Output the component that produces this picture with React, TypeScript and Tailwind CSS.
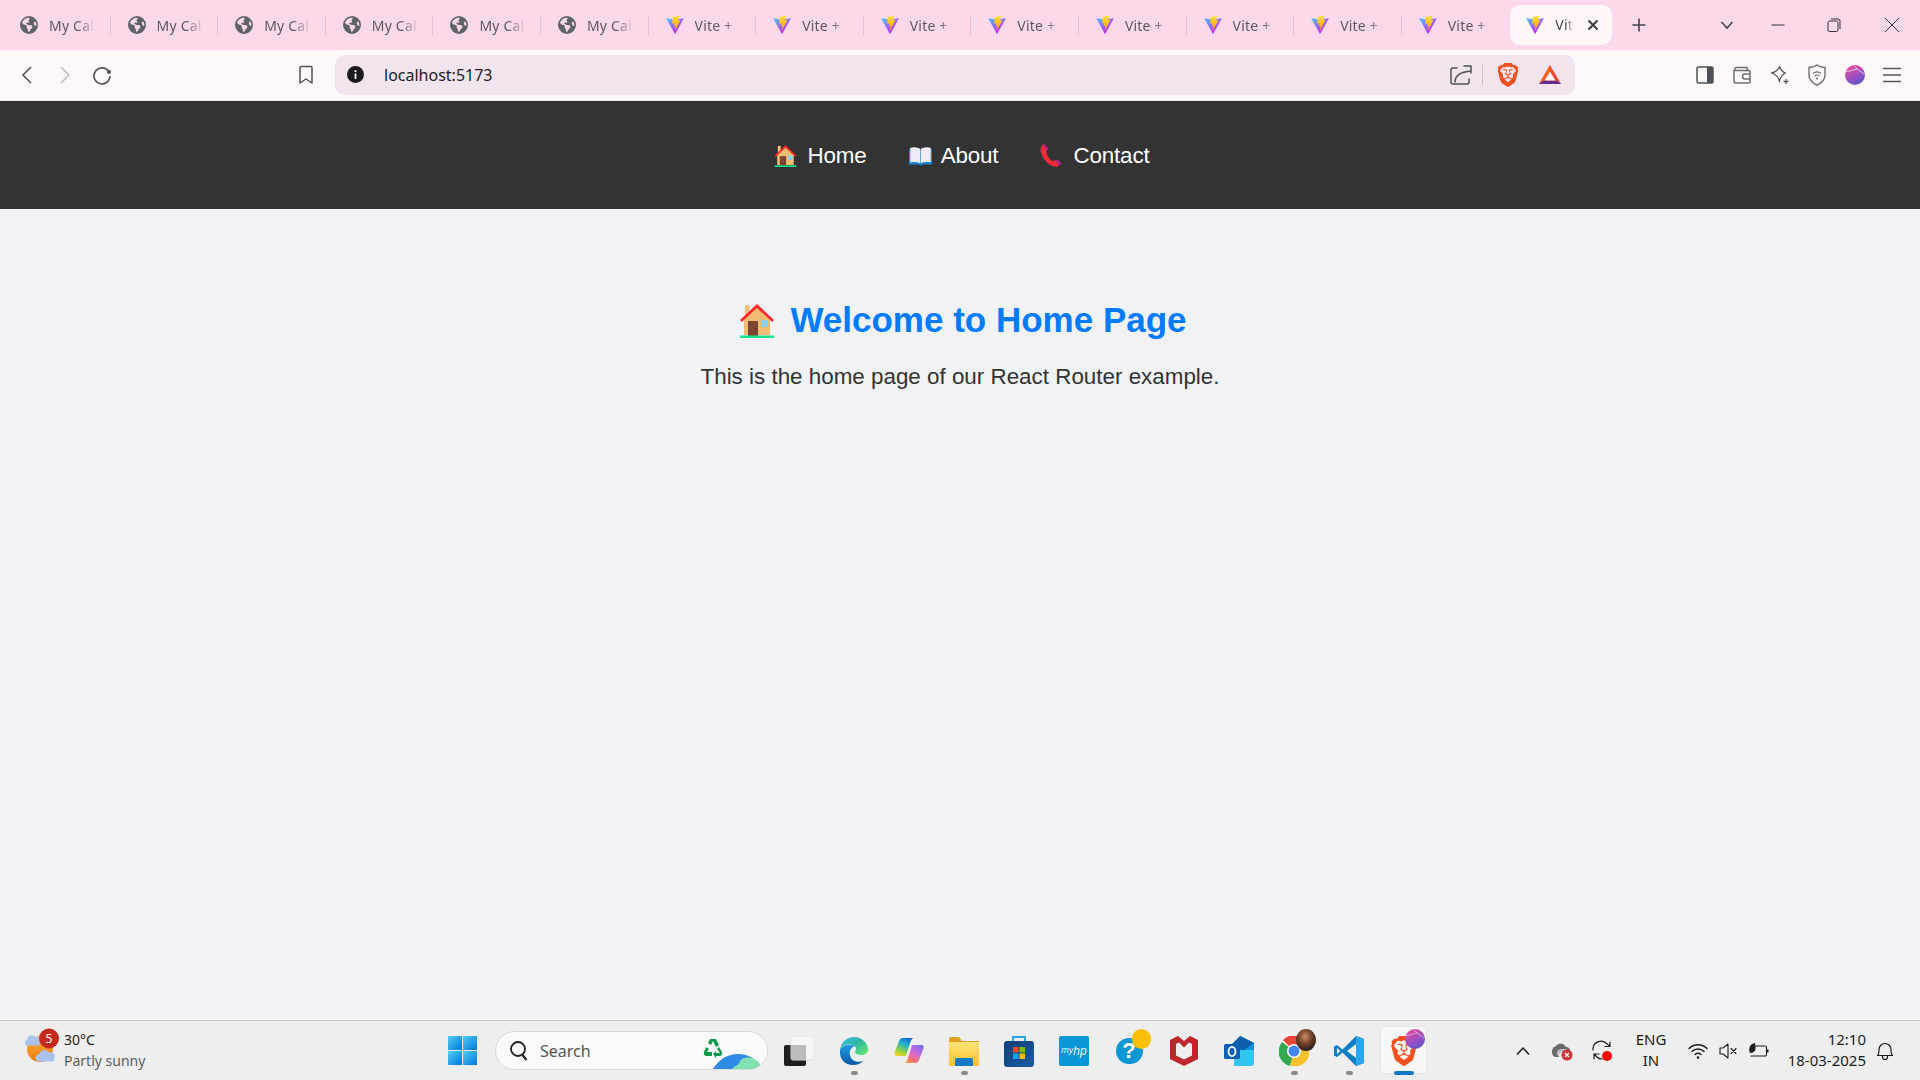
import React from "react";
import { FaEarthAmericas } from "react-icons/fa6";
import { SiBrave } from "react-icons/si";

const Vite = ({ s = 20 }: { s?: number }) => (
  <svg width={s} height={s} viewBox="0 0 32 32" className="shrink-0">
    <path d="M29.8836 6.146L16.7418 29.6457c-.2714.4851-.9684.488-1.2439.0052L2.0956 6.1482c-.3-.5262.15-1.1634.7463-1.057l13.1561 2.3516a.7.7 0 0 0 .2537-.0004l12.8808-2.3478c.5945-.1083 1.0463.5241.7511 1.0513Z" fill="url(#viteA)" />
    <path d="M22.2644 1.1192l-9.7253 1.9056a.357.357 0 0 0-.2879.3295l-.5982 10.1042c-.0141.238.2045.4227.4367.3691l2.7077-.6248c.2534-.0585.4823.1647.4302.4194l-.8044 3.9393c-.0542.265.1947.4916.4536.413l1.6723-.5081c.2592-.0787.5082.1486.4536.4137l-1.2783 6.1876c-.08.3871.4348.5981.6495.2662l.1434-.2216 7.9243-15.8133c.1326-.2647-.096-.5667-.3867-.5106l-2.787.5379c-.2618.0505-.4846-.1933-.4108-.4492l1.819-6.3053c.0739-.2565-.1495-.5-.4113-.4486Z" fill="url(#viteB)" />
  </svg>
);

const Defs = () => (
  <svg width="0" height="0" className="absolute">
    <defs>
      <linearGradient id="viteA" x1="1.6" y1="4" x2="18" y2="26" gradientUnits="userSpaceOnUse">
        <stop stopColor="#41D1FF" /><stop offset="1" stopColor="#BD34FE" />
      </linearGradient>
      <linearGradient id="viteB" x1="15" y1="1.5" x2="18" y2="22" gradientUnits="userSpaceOnUse">
        <stop stopColor="#FFEA83" /><stop offset=".08" stopColor="#FFDD35" /><stop offset="1" stopColor="#FFA800" />
      </linearGradient>
      <linearGradient id="edgeG" x1="0" y1="0" x2="1" y2="1">
        <stop stopColor="#35c1f1" /><stop offset=".45" stopColor="#2fb7a0" /><stop offset="1" stopColor="#66eb6e" />
      </linearGradient>
      <linearGradient id="edgeB" x1="0" y1="0" x2="0" y2="1">
        <stop stopColor="#1b9de2" /><stop offset="1" stopColor="#0c59a4" />
      </linearGradient>
      <linearGradient id="winG" x1="0" y1="0" x2="1" y2="1">
        <stop stopColor="#52d0fb" /><stop offset="1" stopColor="#0473d4" />
      </linearGradient>
      <linearGradient id="copA" x1="0.7" y1="0" x2="0.2" y2="1">
        <stop stopColor="#1266d8" /><stop offset=".35" stopColor="#22b4c8" /><stop offset=".7" stopColor="#8fd04a" /><stop offset="1" stopColor="#f7d62e" />
      </linearGradient>
      <linearGradient id="copB" x1="0.8" y1="0" x2="0.2" y2="1">
        <stop stopColor="#7a6cf0" /><stop offset=".45" stopColor="#d86ad8" /><stop offset=".8" stopColor="#f8706a" /><stop offset="1" stopColor="#f8a040" />
      </linearGradient>
      <linearGradient id="foldG" x1="0" y1="0" x2="0" y2="1">
        <stop stopColor="#ffe27a" /><stop offset="1" stopColor="#fbc02d" />
      </linearGradient>
      <linearGradient id="storeG" x1="0" y1="0" x2="1" y2="1">
        <stop stopColor="#0c3f78" /><stop offset="1" stopColor="#1d5c9f" />
      </linearGradient>
      <radialGradient id="brownG" cx=".45" cy=".35" r=".7">
        <stop stopColor="#c98d62" /><stop offset=".5" stopColor="#6f3f28" /><stop offset="1" stopColor="#1d1512" />
      </radialGradient>
      <linearGradient id="purpleG" x1="0.2" y1="0" x2="0.7" y2="1">
        <stop stopColor="#e8489a" /><stop offset=".55" stopColor="#a04fc0" /><stop offset="1" stopColor="#5c55c8" />
      </linearGradient>
      <linearGradient id="orangeG" x1="0" y1="0" x2="0" y2="1">
        <stop stopColor="#fbb03b" /><stop offset="1" stopColor="#ee7a10" />
      </linearGradient>
      <linearGradient id="batL" x1="0" y1="0" x2="1" y2="1">
        <stop stopColor="#f15a24" /><stop offset="1" stopColor="#ee3b36" />
      </linearGradient>
    </defs>
  </svg>
);

const House = ({ s }: { s: number }) => (
  <svg width={s} height={s} viewBox="0 0 36 36" className="shrink-0">
    <rect x="6" y="3" width="4.5" height="12" fill="#f4c27d" />
    <path d="M5 17 18 5l13 12v16H5Z" fill="#f3bc73" />
    <path d="M1 18 18 2l17 16-1.8 2L18 6 2.800 20Z" fill="#f62b2b" />
    <rect x="9" y="19" width="10" height="15" fill="#7d4533" />
    <circle cx="16.700" cy="27" r=".7" fill="#3b1c12" />
    <rect x="22" y="18" width="7" height="7" fill="#8fd0f8" />
    <rect x="1" y="33.500" width="34" height="2.500" fill="#16e58d" />
  </svg>
);

const Book = ({ s }: { s: number }) => (
  <svg width={s} height={s} viewBox="0 0 36 36" className="shrink-0">
    <path d="M0 9c5-3 13-3 18 0 5-3 13-3 18 0v23H20l-2 2-2-2H0Z" fill="#1c86d6" />
    <path d="M2 6c6-2 12-1 15.500 2v22C14 28 8 27.500 2 28.500Z" fill="#f1ecf8" />
    <path d="M34 6c-6-2-12-1-15.500 2v22c3.500-2 9.500-2.500 15.500-1.500Z" fill="#f1ecf8" />
  </svg>
);

const Phone = ({ s }: { s: number }) => (
  <svg width={s} height={s} viewBox="0 0 36 36" className="shrink-0">
    <path d="M4 1c-3 3-4 8-2 14 3 9 10 17 19 20 4 1.200 7 .5 9-1.500l-5-8-6 1.500C14 23 10 17 9.500 11L13 7.500 7 .5Z" fill="#f52a3a" />
    <path d="M4 1 7 .5l6 7-2 2Z" fill="#a81f8c" />
    <path d="m25 25.500 3-1 6 6-4 3Z" fill="#b02390" />
  </svg>
);

const Tab = ({ vite, last }: { vite?: boolean; last?: boolean }) => (
  <div className={`w-[107.6px] h-5 flex items-center gap-[10px] pl-4 shrink-0 ${last ? "" : "border-r border-[#e0c4d6]"}`}>
    <span className="w-5 h-5 flex items-center justify-center shrink-0">
      {vite ? <Vite /> : <FaEarthAmericas size={18} className="text-[#5f6368]" />}
    </span>
    <span className="w-[48px] whitespace-nowrap text-[14px] tracking-[0.2px] text-[#5c5960] [mask-image:linear-gradient(90deg,#000_60%,transparent_98%)]">
      {vite ? "Vite +" : "My Cal"}
    </span>
  </div>
);

const Cell = ({ children, dot, className = "" }: { children: React.ReactNode; dot?: boolean; className?: string }) => (
  <div className={`w-[55px] h-[59px] relative flex items-center justify-center shrink-0 ${className}`}>
    {children}
    {dot && <span className="absolute left-[24px] bottom-[5px] w-[7px] h-[4px] rounded-full bg-[#8a8a8a]" />}
  </div>
);

const stroke = { fill: "none", stroke: "currentColor", strokeWidth: 1.4, strokeLinecap: "round", strokeLinejoin: "round" } as const;

export default function App() {
  return (
    <div className="w-[1920px] h-[1080px] overflow-hidden flex flex-col bg-[#f0f2f5] font-['Liberation_Sans',Arial,sans-serif]">
      <Defs />
      {/* tab strip */}
      <div className="h-[50px] shrink-0 bg-[#fbd9eb] flex items-center pl-[3px] font-['Noto_Sans',sans-serif]">
        {Array.from({ length: 6 }).map((_, i) => <Tab key={i} />)}
        {Array.from({ length: 8 }).map((_, i) => <Tab key={i} vite last={i === 7} />)}
        <div className="ml-[1px] w-[102px] h-[40px] -mt-[1px] rounded-[10px] bg-[#fff7f8] flex items-center pl-[15px] shrink-0">
          <Vite />
          <span className="ml-[10px] w-[20px] whitespace-nowrap text-[14px] tracking-[0.2px] text-[#444] [mask-image:linear-gradient(90deg,#000_50%,transparent)]">Vit</span>
          <svg width="12" height="12" viewBox="0 0 12 12" className="ml-[12px] text-[#3c3c3c]"><path d="M1.500 1.500l9 9M10.500 1.500l-9 9" fill="none" stroke="currentColor" strokeWidth="2" /></svg>
        </div>
        <svg width="16" height="16" viewBox="0 0 16 16" className="ml-[19px] text-[#444]"><path d="M8 1.500v13M1.500 8h13" fill="none" stroke="currentColor" strokeWidth="1.600" /></svg>
        <svg width="14" height="10" viewBox="0 0 14 10" className="ml-[73px] text-[#444]"><path d="M1.500 2 7 8l5.500-6" fill="none" stroke="currentColor" strokeWidth="1.600" /></svg>
        <svg width="14" height="14" viewBox="0 0 14 14" className="ml-[37px] text-[#333]"><path d="M0.500 7h13" stroke="currentColor" strokeWidth="1" /></svg>
        <svg width="14" height="14" viewBox="0 0 14 14" className="ml-[42px] text-[#333]"><rect x="1" y="3" width="10" height="10.500" rx="1.500" fill="none" stroke="currentColor" /><path d="M4 1h7a2 2 0 0 1 2 2v8" fill="none" stroke="currentColor" /></svg>
        <svg width="16" height="16" viewBox="0 0 16 16" className="ml-[43px] text-[#333]"><path d="M1 1l14 14M15 1 1 15" fill="none" stroke="currentColor" strokeWidth="1" /></svg>
      </div>

      {/* toolbar */}
      <div className="h-[51px] shrink-0 bg-[#fff8f9] border-b border-[#f1e3e6] flex items-center font-['Noto_Sans',sans-serif] pb-[1px]">
        <svg width="12" height="20" viewBox="0 0 12 20" className="ml-[21px] text-[#505358]"><path d="M10 2 2 10l8 8" fill="none" stroke="currentColor" strokeWidth="1.600" /></svg>
        <svg width="12" height="20" viewBox="0 0 12 20" className="ml-[26px] text-[#bdbdbd]"><path d="m2 2 8 8-8 8" fill="none" stroke="currentColor" strokeWidth="1.600" /></svg>
        <svg width="20" height="20" viewBox="0 0 20 20" className="ml-[21px] text-[#505358]"><path d="M17 7a8 8 0 1 0 1 4" fill="none" stroke="currentColor" strokeWidth="1.600" /><circle cx="17" cy="7" r="2" fill="currentColor" /></svg>
        <svg width="14" height="20" viewBox="0 0 14 20" className="ml-[187px] text-[#505358]"><path d="M2 1.500h10a1 1 0 0 1 1 1V18l-6-4-6 4V2.500a1 1 0 0 1 1-1Z" fill="none" stroke="currentColor" strokeWidth="1.500" strokeLinejoin="round" /></svg>
        <div className="ml-[22px] w-[1240px] h-10 rounded-[10px] bg-[#f1e4ee] flex items-center shrink-0">
          <svg width="17" height="17" viewBox="0 0 17 17" className="ml-3"><circle cx="8.500" cy="8.500" r="8.500" fill="#1a1a1e" /><rect x="7.600" y="7.500" width="1.800" height="5.500" fill="#fff" /><rect x="7.600" y="4.200" width="1.800" height="1.900" fill="#fff" /></svg>
          <span className="ml-5 text-[16px] text-[#202124]">localhost:5173</span>
          <svg width="22" height="20" viewBox="0 0 22 20" className="ml-auto text-[#505358]"><path d="M7 3H3a2 2 0 0 0-2 2v12a2 2 0 0 0 2 2h14a2 2 0 0 0 2-2v-3" fill="none" stroke="currentColor" strokeWidth="1.500" strokeLinecap="round" strokeLinejoin="round" /><path d="M5 17c0-6 5-10 16-11M14 1h7v7" fill="none" stroke="currentColor" strokeWidth="1.500" strokeLinecap="round" strokeLinejoin="round" /></svg>
          <span className="ml-[10px] h-5 w-[1px] bg-[#cdbfca]" />
          <SiBrave size={24} className="ml-[13px] text-[#f1511e]" />
          <svg width="24" height="22" viewBox="0 0 24 22" className="ml-[18px] mr-[13px]"><path d="M12 1 1 20h22Z" fill="url(#batL)" /><path d="M12 1v5L6 16.500 1 20Z" fill="#f7641d" /><path d="M1 20h22l-5-3.500H6Z" fill="#662d91" /><path d="M12 7.500 6.500 16.500h11Z" fill="#fff6fb" /></svg>
        </div>
        <svg width="18" height="18" viewBox="0 0 18 18" className="ml-[121px] text-[#4e5257]"><rect x="1" y="1" width="16" height="16" rx="1.500" fill="none" stroke="currentColor" strokeWidth="1.500" /><rect x="11" y="1" width="6" height="16" fill="currentColor" /></svg>
        <svg width="20" height="20" viewBox="0 0 20 20" className="ml-[18px] text-[#6a6d72]"><path d="M3 5.500a2 2 0 0 1 2-3h10v3M2 5.500h15a1 1 0 0 1 1 1V17a1 1 0 0 1-1 1H3.500A1.500 1.500 0 0 1 2 16.500ZM18 9h-5a2 2 0 0 0 0 5h5" fill="none" stroke="currentColor" strokeWidth="1.500" strokeLinejoin="round" /></svg>
        <svg width="20" height="20" viewBox="0 0 20 20" className="ml-[18px] text-[#55585d]"><path d="M9.500 1.500c1.500 4 3 5.500 6 6.500-3 1.200-5 3-6 8.500-1-5-3.500-7-8-8.500 4.500-1 6.500-2.500 8-6.500Z" fill="none" stroke="currentColor" strokeWidth="1.300" strokeLinejoin="round" /><path d="M16 14v5M13.500 16.500h5" stroke="currentColor" strokeWidth="1.300" /></svg>
        <svg width="18" height="22" viewBox="0 0 18 22" className="ml-[18px] text-[#6a6d72]"><path d="M9 1c2 1.500 5 2.500 8 2.500V11c0 5-3.500 8-8 10-4.500-2-8-5-8-10V3.500C4 3.500 7 2.500 9 1Z" fill="none" stroke="currentColor" strokeWidth="1.400" /><path d="M5 9.500c2.500-2 5.500-2 8 0M6.500 12c1.500-1.200 3.500-1.200 5 0" fill="none" stroke="currentColor" strokeWidth="1.200" /><circle cx="9" cy="14.500" r="1" fill="currentColor" /></svg>
        <svg width="20" height="20" viewBox="0 0 20 20" className="ml-[19px]"><circle cx="10" cy="10" r="10" fill="url(#purpleG)" /><path d="M0.500 7 12 4l7 5M12 4 9 0.500" fill="none" stroke="#fff" strokeOpacity=".75" strokeWidth=".9" /></svg>
        <svg width="18" height="16" viewBox="0 0 18 16" className="ml-[18px] text-[#55585d]"><path d="M0 1.500h18M0 8h18M0 14.500h18" stroke="currentColor" strokeWidth="1.500" /></svg>
      </div>

      {/* nav */}
      <nav className="h-[108px] shrink-0 bg-[#333333] flex items-center justify-center gap-[42px] pl-[4px] pt-[2px] text-[22.4px] text-white tracking-[-0.15px]">
        <a className="flex items-center gap-[10px]"><House s={23} />Home</a>
        <a className="flex items-center gap-[9px]"><Book s={23} />About</a>
        <a className="flex items-center gap-[10px]"><Phone s={23} />Contact</a>
      </nav>

      {/* main */}
      <main className="flex-1 flex flex-col items-center pt-[89px]">
        <h1 className="flex items-center gap-[15px] pl-[6px] text-[35px] leading-[44px] font-bold text-[#007bff]"><House s={36} />Welcome to Home Page</h1>
        <p className="mt-[20px] text-[22.4px] leading-[30px] text-[#333333]">This is the home page of our React Router example.</p>
      </main>

      {/* taskbar */}
      <div className="h-[60px] shrink-0 bg-[#eeeeee] border-t border-[#c4c4c4] flex items-center font-['Noto_Sans',sans-serif]">
        <div className="w-[448px] shrink-0 flex items-center pl-[25px]">
          <div className="relative w-[30px] h-[44px] shrink-0 -translate-y-[0.5px]">
            <svg width="31" height="36" viewBox="0 0 31 36"><circle cx="15" cy="20.500" r="13" fill="url(#orangeG)" /><path d="M1 17a3.500 3.500 0 0 1 1-6 5 5 0 0 1 9-2 3.500 3.500 0 0 1 4 6 2.500 2.500 0 0 1-1 2Z" fill="#a9c3ee" /><path d="M14 33a3.500 3.500 0 0 1 0-7 5.500 5.500 0 0 1 10-2 4 4 0 0 1 5 6 3 3 0 0 1-1 3Z" fill="#a9c3ee" /></svg>
            <span className="absolute left-[14px] top-0 w-5 h-5 rounded-full bg-[#c42b1c] text-white text-[12px] leading-5 text-center">5</span>
          </div>
          <div className="ml-[9px] flex flex-col leading-[21px] pb-[2px]">
            <span className="text-[14px] text-[#222]">30°C</span>
            <span className="text-[14px] text-[#5d5d5d]">Partly sunny</span>
          </div>
        </div>
        <svg width="29" height="29" viewBox="0 0 29 29" className="shrink-0"><g fill="url(#winG)"><rect width="14" height="14" /><rect x="15" width="14" height="14" /><rect y="15" width="14" height="14" /><rect x="15" y="15" width="14" height="14" /></g></svg>
        <div className="ml-[18px] w-[273px] h-[39px] rounded-full bg-[#fafafa] border border-[#d9d9d9] flex items-center relative shrink-0 overflow-hidden">
          <svg width="20" height="22" viewBox="0 0 20 22" className="ml-[13px] text-[#222]"><circle cx="9" cy="9" r="7" fill="none" stroke="currentColor" strokeWidth="1.800" /><path d="m13.500 15 4 5" stroke="currentColor" strokeWidth="2.200" /></svg>
          <span className="ml-[11px] text-[16px] text-[#555]">Search</span>
          <svg width="22" height="22" viewBox="0 0 22 22" className="absolute left-[206px] top-[5px]"><path d="M8 2h6l3 6-3 2-3-6-2 4-3-2ZM4 10l3 2-2 3h5v4H4a3 3 0 0 1-2-4ZM17 10l3 5a3 3 0 0 1-2 4h-4v2l-3-4 3-3v2h4l-3-4Z" fill="#0a9b4b" /></svg>
          <svg width="50" height="17" viewBox="0 0 50 17" className="absolute left-[216px] top-[22px]"><path d="M0 16C6 7 14 0 26 0c11 0 19 6 24 13-6 3-14 3-20 3Z" fill="#2f8be6" /><path d="M20 16c2-5 7-4 8-9 2-4 8-4 12-3 4 2 7 5 10 9-8 3-18 4-30 3Z" fill="#83e2b2" /></svg>
        </div>
        <div className="ml-[3.5px] flex items-center">
          <Cell>
            <svg width="30" height="30" viewBox="0 0 30 30"><rect x="0" y="9" width="22" height="21" rx="2" fill="#1f1f1f" /><rect x="7" y="0" width="23" height="24" rx="2" fill="#f6f6f6" stroke="#e2e2e2" /><rect x="7" y="9" width="15" height="15" fill="#bcbcbc" /></svg>
          </Cell>
          <Cell dot>
            <svg width="30" height="30" viewBox="0 0 30 30"><path d="M1 14C2 6 8 1 15 1c8 0 14 6 14 13 0 3-3 5-7 5-3 0-6-1-6-3 0-1 1-1 1-3 0-3-3-5-7-5C5 8 2 11 1 14Z" fill="url(#edgeG)" /><path d="M1 14c-1 9 5 15 13 15 4 0 7-1 10-4-6 2-12 0-13-6-1-4 1-8 5-9-5-3-13-1-15 4Z" fill="url(#edgeB)" /></svg>
          </Cell>
          <Cell>
            <svg width="30" height="27" viewBox="0 0 30 27"><path d="M9 1h11c-2 0-3 2-4 5L12 19H2.500C.5 19 0 17.500.5 15.500L5 4c.7-2 2-3 4-3Z" fill="url(#copA)" /><path d="M21 26H10c2 0 3-2 4-5L18 8h9.500c2 0 2.500 1.500 2 3.500L25 23c-.7 2-2 3-4 3Z" fill="url(#copB)" /></svg>
          </Cell>
          <Cell dot>
            <svg width="30" height="30" viewBox="0 0 30 30"><path d="M0 3a2 2 0 0 1 2-2h8l3 4h17v6H0Z" fill="#dfa01e" /><path d="M0 6h30v24H0Z" fill="url(#foldG)" /><path d="M6 24a2 2 0 0 1 2-2h14a2 2 0 0 1 2 2v6H6Z" fill="#1479c4" /></svg>
          </Cell>
          <Cell>
            <svg width="30" height="32" viewBox="0 0 30 32"><path d="M9 6V2h12v4" fill="none" stroke="#25a6dd" strokeWidth="2" /><rect y="6" width="30" height="26" rx="3" fill="url(#storeG)" /><rect x="9" y="12" width="5.500" height="5.500" fill="#f25022" /><rect x="15.500" y="12" width="5.500" height="5.500" fill="#7fba00" /><rect x="9" y="18.500" width="5.500" height="5.500" fill="#00a4ef" /><rect x="15.500" y="18.500" width="5.500" height="5.500" fill="#ffb900" /></svg>
          </Cell>
          <Cell>
            <div className="w-[30px] h-[30px] rounded-[2px] bg-[#0a96d6] flex items-center justify-center text-[#e8f6fc] italic font-['Liberation_Sans',sans-serif]"><span className="text-[9px]">my</span><span className="text-[12px]">hp</span></div>
          </Cell>
          <Cell>
            <div className="w-[27px] h-[26px] rounded-full bg-[#0b96d4] flex items-center justify-center text-white font-bold text-[22px] font-['Liberation_Sans',sans-serif]">?</div>
            <span className="absolute left-[30px] top-[8px] w-[19px] h-[20px] rounded-full bg-[#fdc006]" />
          </Cell>
          <Cell>
            <svg width="28" height="30" viewBox="0 0 28 30"><path d="M0 4 8 0l6 5 6-5 8 4v19l-14 7-14-7Zm6 4v11.500l8 4 8-4V8l-3-1.500-5 5-5-5Z" fill="#c0272d" /></svg>
          </Cell>
          <Cell>
            <svg width="30" height="30" viewBox="0 0 30 30"><path d="M16 0 30 7v17a3 3 0 0 1-3 3H11v-7Z" fill="#1490df" /><path d="M16 0 30 7 19 15 8 8Z" fill="#0a5fa8" /><path d="M10 30V14l20 0v13a3 3 0 0 1-3 3Z" fill="#34c4f0" /><rect y="8" width="16" height="15" rx="1.500" fill="#0a5fb4" /><ellipse cx="8" cy="15.500" rx="3.500" ry="4.700" fill="none" stroke="#fff" strokeWidth="1.800" /></svg>
          </Cell>
          <Cell dot>
            <svg width="30" height="30" viewBox="0 0 30 30"><path d="M15 15 4 4A15 15 0 0 1 29 9H15Z" fill="#ea4335" /><path d="M15 15 3 6a15 15 0 0 0 8 24Z" fill="#34a853" /><path d="M15 15 29 9a15 15 0 0 1-18 21Z" fill="#fbc02d" /><circle cx="15" cy="15" r="7" fill="#fff" /><circle cx="15" cy="15" r="5.500" fill="#4285f4" /></svg>
            <svg width="20" height="22" viewBox="0 0 20 22" className="absolute left-[29px] top-[8px]"><ellipse cx="10" cy="11" rx="10" ry="11" fill="url(#brownG)" /></svg>
          </Cell>
          <Cell dot>
            <svg width="30" height="30" viewBox="0 0 30 30"><path d="M22 0 8.500 13.500 3 9 0 10.500v9L3 21l5.500-4.500L22 30l8-3V3Z" fill="#0e7ec4" /><path d="M22 0 30 3v24l-8 3Z" fill="#2aa5ef" /><path d="M22 8v14l-9-7Z" fill="#eeeeee" /><path d="M3 12v6l3.500-3Z" fill="#eeeeee" /></svg>
          </Cell>
          <Cell>
            <div className="absolute left-[3.500px] top-[5px] w-[47px] h-[48px] rounded-[5px] bg-[#f8f8f8] border border-[#e6e6e6]" />
            <SiBrave size={30} className="relative text-[#f1511e]" />
            <svg width="20" height="20" viewBox="0 0 20 20" className="absolute left-[28px] top-[8px]"><circle cx="10" cy="10" r="10" fill="url(#purpleG)" /><path d="M0.500 7 12 4l7 5M12 4 9 0.500" fill="none" stroke="#fff" strokeOpacity=".6" strokeWidth=".8" /></svg>
            <span className="absolute left-[17px] bottom-[5px] w-[20px] h-[4px] rounded-full bg-[#0b78d0]" />
          </Cell>
        </div>
        <div className="ml-[71.5px] flex items-center text-[#1c1c1c] text-[15px]">
          <div className="w-10 flex justify-center">
            <svg width="16" height="10" viewBox="0 0 16 10"><path d="M2 8.500 8 2l6 6.500" fill="none" stroke="#1c1c1c" strokeWidth="1.500" /></svg>
          </div>
          <div className="w-10 flex justify-center">
            <svg width="22" height="20" viewBox="0 0 22 20"><path d="M3 16a6 6 0 0 1 1-11c3-4 8-3 10 1 3 0 4 2 4 4H10c-3 0-5 3-3 6Z" fill="#6b6b6b" /><path d="M5 14c-1-3 1-6 4-6h6" fill="#bdbdbd" /><circle cx="15" cy="14" r="5.500" fill="#d13438" /><path d="m13 12 4 4m0-4-4 4" stroke="#fff" strokeWidth="1.200" /></svg>
          </div>
          <div className="w-10 flex justify-center">
            <svg width="22" height="22" viewBox="0 0 22 22"><path d="M1 10a8 8 0 0 1 14-6l3 2M18 2v4.500h-5M2 14l3 3a7 7 0 0 0 5 2M2 19v-5h5" {...stroke} strokeWidth={1.200} /><circle cx="15" cy="16" r="5" fill="#f00" /></svg>
          </div>
          <div className="w-14 flex flex-col items-center leading-[21px] pb-[2px]"><span>ENG</span><span>IN</span></div>
          <div className="w-[38px] flex justify-center">
            <svg width="20" height="16" viewBox="0 0 20 16"><path d="M1 5.500c5-5 13-5 18 0M4 8.500c3.500-3.300 8.500-3.300 12 0M7 11.500c2-1.700 4-1.700 6 0" {...stroke} /><circle cx="10" cy="14.500" r="1.300" fill="#1c1c1c" /></svg>
          </div>
          <div className="w-[22px] flex justify-center">
            <svg width="19" height="16" viewBox="0 0 19 16"><path d="M1 5h3l5-4v14l-5-4H1Z" {...stroke} strokeWidth={1.100} /><path d="m12 5.500 5 5m0-5-5 5" {...stroke} strokeWidth={1.100} /></svg>
          </div>
          <div className="w-[38px] flex justify-center">
            <svg width="21" height="18" viewBox="0 0 21 18"><path d="M8 4h9a1.500 1.500 0 0 1 1.500 1.500v7A1.500 1.500 0 0 1 17 14H3" {...stroke} strokeWidth={1.100} /><path d="M19 7.500h1.500v3H19" fill="#1c1c1c" /><path d="M7 1C2 2 0 6 2 11c4 0 7-3 5-10Z" fill="#1c1c1c" /></svg>
          </div>
          <div className="w-[89px] flex flex-col items-end leading-[21px] pb-[2px]"><span>12:10</span><span>18-03-2025</span></div>
          <div className="w-[38px] flex justify-center">
            <svg width="18" height="20" viewBox="0 0 18 20"><path d="M1.500 14.500c1.500-1 1.500-3 1.500-6a6 6 0 0 1 12 0c0 3 0 5 1.500 6ZM6.500 14.500v1.500a2.500 2.500 0 0 0 5 0v-1.500" {...stroke} strokeWidth={1.200} /></svg>
          </div>
        </div>
      </div>
    </div>
  );
}
